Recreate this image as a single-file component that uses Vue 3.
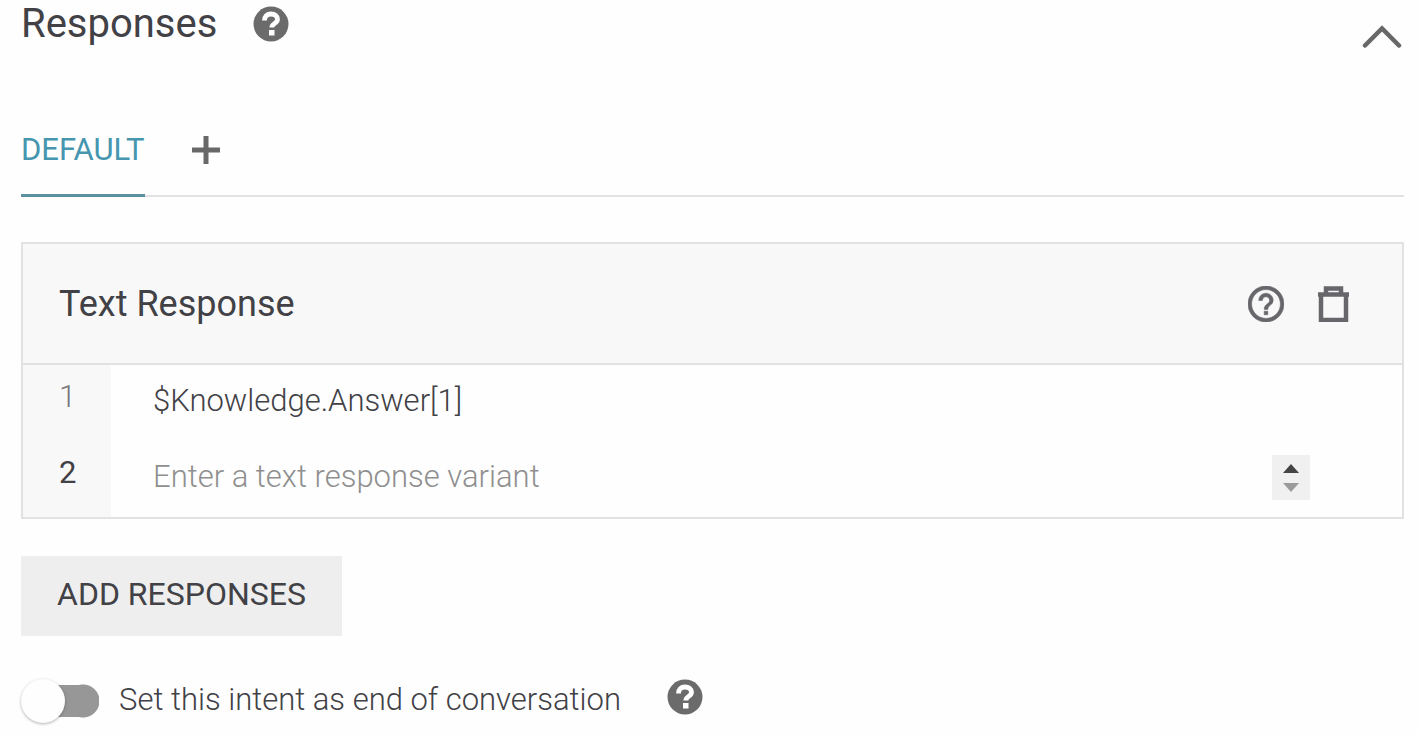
<script setup>
import { ref } from 'vue'

const open = ref(true)
const first = ref('$Knowledge.Answer[1]')
const second = ref('')
const endOfConversation = ref(false)
</script>

<template>
  <main class="panel">
    <header class="panel-head">
      <h1>Responses</h1>
      <button class="icon-btn" type="button" aria-label="About responses">
        <svg class="help-solid" viewBox="0 0 36 36" aria-hidden="true">
          <circle cx="18" cy="18" r="17.500" fill="#6b6b6b" />
          <path d="M11.500 14.500c0-4 2.500-6.500 6.500-6.500 3.800 0 6.500 2.100 6.500 5.300 0 4.200-5.700 4-5.700 8.200" fill="none" stroke="#fff" stroke-width="4.800" />
          <rect x="16" y="24" width="5.500" height="5.500" fill="#fff" />
        </svg>
      </button>
      <button class="icon-btn collapse" type="button" aria-label="Collapse responses" :aria-expanded="open" @click="open = !open">
        <svg class="chevron" viewBox="0 0 40 24" aria-hidden="true">
          <path d="M3 21.500L20 4.500L37 21.500" fill="none" stroke="#686868" stroke-width="4.500" stroke-linecap="round" />
        </svg>
      </button>
    </header>

    <nav class="tabs">
      <button class="tab" type="button">DEFAULT</button>
      <button class="icon-btn add-tab" type="button" aria-label="Add platform">
        <svg class="plus" viewBox="0 0 30 30" aria-hidden="true">
          <path d="M15 1V29M1 15H29" stroke="#686868" stroke-width="5" />
        </svg>
      </button>
    </nav>

    <section class="card">
      <header class="card-head">
        <h2>Text Response</h2>
        <button class="icon-btn" type="button" aria-label="About text response">
          <svg class="tool" viewBox="2 2 20 20" aria-hidden="true">
            <path fill="#67676b" stroke="#67676b" stroke-width="0.300" d="M11 18h2v-2h-2v2zm1-16C6.480 2 2 6.480 2 12s4.480 10 10 10 10-4.480 10-10S17.520 2 12 2zm0 18c-4.410 0-8-3.590-8-8s3.590-8 8-8 8 3.590 8 8-3.590 8-8 8zm0-14c-2.210 0-4 1.790-4 4h2c0-1.100.900-2 2-2s2 .900 2 2c0 2-3 1.750-3 5h2c0-2.250 3-2.500 3-5 0-2.210-1.790-4-4-4z" />
          </svg>
        </button>
        <button class="icon-btn" type="button" aria-label="Delete text response">
          <svg class="tool" viewBox="0 0 36 36" aria-hidden="true">
            <path d="M5 9V34H30V9M2 8.500H33M10 8.500V2.500H25V8.500" fill="none" stroke="#67676b" stroke-width="4.500" />
          </svg>
        </button>
      </header>
      <div class="row">
        <label class="number faded" for="variant-1">1</label>
        <input id="variant-1" v-model="first" class="variant" type="text" />
      </div>
      <div class="row">
        <label class="number" for="variant-2">2</label>
        <input id="variant-2" v-model="second" class="variant" type="text" placeholder="Enter a text response variant" />
        <div class="stepper">
          <button type="button" aria-label="Scroll up">
            <svg viewBox="0 0 18 10" aria-hidden="true"><path d="M0 10L9 0L18 10Z" fill="#444" /></svg>
          </button>
          <button type="button" aria-label="Scroll down">
            <svg viewBox="0 0 18 10" aria-hidden="true"><path d="M0 0L9 10L18 0Z" fill="#9b9b9b" /></svg>
          </button>
        </div>
      </div>
    </section>

    <button class="add" type="button">ADD RESPONSES</button>

    <footer class="end">
      <input id="end-toggle" v-model="endOfConversation" class="toggle" type="checkbox" role="switch" />
      <label for="end-toggle">Set this intent as end of conversation</label>
      <button class="icon-btn" type="button" aria-label="About end of conversation">
        <svg class="help-solid" viewBox="0 0 36 36" aria-hidden="true">
          <circle cx="18" cy="18" r="17.500" fill="#6b6b6b" />
          <path d="M11.500 14.500c0-4 2.500-6.500 6.500-6.500 3.800 0 6.500 2.100 6.500 5.300 0 4.200-5.700 4-5.700 8.200" fill="none" stroke="#fff" stroke-width="4.800" />
          <rect x="16" y="24" width="5.500" height="5.500" fill="#fff" />
        </svg>
      </button>
    </footer>
  </main>
</template>

<style>
body {
  background: #fefefe;
}
</style>

<style scoped>
* {
  box-sizing: border-box;
}

.panel {
  padding: 0 14px 0 21px;
  color: #414146;
  font-family: Roboto, "Liberation Sans", sans-serif;
}

button,
input {
  margin: 0;
  padding: 0;
  border: 0;
  background: none;
  color: inherit;
  font: inherit;
}

h1,
h2 {
  margin: 0;
  font-weight: 400;
}

svg {
  display: block;
}

.icon-btn {
  display: flex;
  flex: none;
}

.panel-head {
  display: flex;
  align-items: center;
  height: 48px;
}

h1 {
  margin-right: 36px;
  font-size: 40px;
  line-height: 48px;
}

.help-solid {
  width: 36px;
  height: 36px;
}

.collapse {
  align-self: flex-end;
  margin-right: 2px;
  margin-left: auto;
}

.chevron {
  width: 40px;
  height: 24px;
}

.tabs {
  display: flex;
  margin-top: 56px;
  height: 93px;
  border-bottom: 2px solid #e2e2e2;
}

.tab {
  margin-bottom: -2px;
  border-bottom: 3px solid #5c8f9f;
  color: #4596ae;
  font-size: 31px;
}

.add-tab {
  align-items: center;
  margin-left: 46px;
}

.plus {
  width: 30px;
  height: 30px;
}

.card {
  margin-top: 45px;
  border: 2px solid #e2e2e2;
}

.card-head {
  display: flex;
  align-items: center;
  gap: 32px;
  height: 121px;
  padding: 0 50px 0 36px;
  border-bottom: 2px solid #e2e2e2;
  background: #f8f8f8;
}

h2 {
  flex: 1;
  font-size: 36px;
}

.tool {
  width: 36px;
  height: 36px;
}

.row {
  display: flex;
  height: 76px;
}

.number {
  width: 88px;
  padding-left: 36px;
  background: #f8f8f8;
  font-size: 31px;
  line-height: 64px;
}

.faded {
  color: #77777a;
  font-weight: 300;
}

.variant {
  flex: 1;
  min-width: 0;
  padding: 0 0 6px 42px;
  outline: 0;
  font-size: 31px;
  font-weight: 300;
}

.variant::placeholder {
  color: #8f8f8f;
  opacity: 1;
}

.stepper {
  display: flex;
  flex-direction: column;
  justify-content: center;
  gap: 10px;
  width: 38px;
  height: 45px;
  margin: 14px 92px 0 0;
  background: #f0f0f0;
}

.stepper svg {
  width: 16px;
  height: 9px;
  margin: 0 auto;
}

.add {
  display: block;
  height: 80px;
  margin-top: 37px;
  padding: 0 36px 4px;
  background: #eee;
  font-size: 32px;
}

.end {
  display: flex;
  align-items: center;
  margin-top: 40px;
  font-size: 31px;
  font-weight: 300;
}

.toggle {
  display: flex;
  align-items: center;
  width: 78px;
  height: 50px;
  margin-right: 20px;
  appearance: none;
  background:
    radial-gradient(circle at 62px 25px, #979797 16px, transparent 17px),
    linear-gradient(#979797, #979797) 20px 9px / 42px 32px no-repeat;
}

.toggle::before {
  content: "";
  width: 44px;
  height: 44px;
  border-radius: 50%;
  background: #fefefe;
  box-shadow: 0 1px 3px rgba(0, 0, 0, 0.3);
}

.toggle:checked {
  justify-content: flex-end;
}

.end label {
  padding-bottom: 4px;
}

.end .icon-btn {
  margin-left: 46px;
  padding-bottom: 8px;
}
</style>
